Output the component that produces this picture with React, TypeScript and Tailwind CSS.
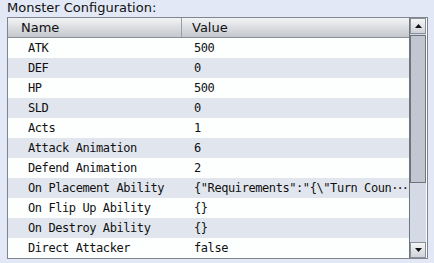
import React from "react";

const rows: [string, string][] = [
  ["ATK", "500"],
  ["DEF", "0"],
  ["HP", "500"],
  ["SLD", "0"],
  ["Acts", "1"],
  ["Attack Animation", "6"],
  ["Defend Animation", "2"],
  ["On Placement Ability", "PLACEMENT"],
  ["On Flip Up Ability", "{}"],
  ["On Destroy Ability", "{}"],
  ["Direct Attacker", "false"],
];

export default function App() {
  return (
    <div className="w-[434px] h-[263px] bg-[#e2e8f5] overflow-hidden relative">
      <div
        className="h-[17px] pl-[7px] text-[13px] leading-[15px] text-[#111]"
        style={{ fontFamily: '"DejaVu Sans", sans-serif' }}
      >
        Monster Configuration:
      </div>
      <div className="ml-[7px] w-[421px] h-[242px] border border-[#80858d] flex bg-white">
        <div className="w-[402px] border-r border-[#70757d] flex flex-col">
          <div
            className="h-[20px] flex border-b border-[#8a8e95] bg-gradient-to-b from-[#f3f4f6] to-[#c4c7cc] text-[13px] leading-[19px] text-[#111]"
            style={{ fontFamily: '"DejaVu Sans", sans-serif' }}
          >
            <div className="w-[174px] pl-[13px] border-r border-[#9a9ea5]">Name</div>
            <div className="flex-1 pl-[10px]">Value</div>
          </div>
          {rows.map(([n, v], i) => (
            <div
              key={n}
              className={`h-[20px] flex text-[12px] tracking-[-0.42px] leading-[20px] text-[#111] ${
                i % 2 === 1 ? "bg-[#e1e6ee]" : "bg-[#fdfefe]"
              }`}
              style={{ fontFamily: '"DejaVu Sans Mono", monospace' }}
            >
              <div className="w-[174px] pl-[20px] whitespace-pre">{n}</div>
              <div className="flex-1 pl-[12px] whitespace-pre overflow-hidden">
                {v === "PLACEMENT" ? (
                  <>
                    {'{"Requirements":"{\\"Turn Coun'}
                    <span className="tracking-[-2px]">···</span>
                  </>
                ) : (
                  v
                )}
              </div>
            </div>
          ))}
        </div>
        <div className="w-[16px] flex flex-col bg-[#d3dae5]">
          <div className="h-[16px] border border-[#8b9098] bg-gradient-to-b from-[#f4f5f7] to-[#cfd3d9] flex items-center justify-center">
            <svg width="7" height="4" viewBox="0 0 7 4">
              <path d="M3.5 0 L7 4 L0 4 Z" fill="#111" />
            </svg>
          </div>
          <div className="mt-px h-[148px] border border-[#6e737b] bg-[#c1c6d0]" />
          <div className="flex-1" />
          <div className="h-[16px] border border-[#8b9098] bg-gradient-to-b from-[#f4f5f7] to-[#cfd3d9] flex items-center justify-center">
            <svg width="7" height="4" viewBox="0 0 7 4">
              <path d="M0 0 L7 0 L3.5 4 Z" fill="#111" />
            </svg>
          </div>
        </div>
      </div>
    </div>
  );
}
